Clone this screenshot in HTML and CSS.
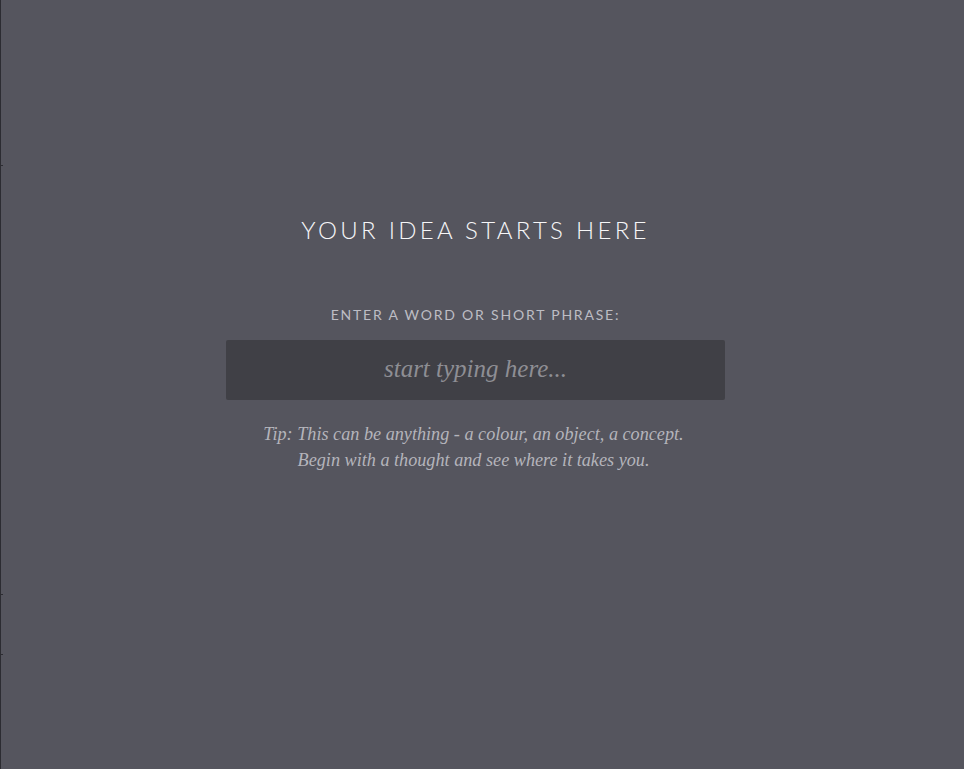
FILE: index.html
```html
<!DOCTYPE html>
<html lang="en">
<head>
<meta charset="utf-8">
<title>Your idea starts here</title>
<link rel="stylesheet" href="styles.css">
</head>
<body>
<div class="page">
  <span class="tick tick-a"></span>
  <span class="tick tick-b"></span>
  <span class="tick tick-c"></span>
  <main class="intro">
    <h1 class="title">YOUR IDEA STARTS HERE</h1>
    <label class="label" for="idea">ENTER A WORD OR SHORT PHRASE:</label>
    <input class="field" id="idea" type="text" placeholder="start typing here...">
    <p class="tip">Tip: This can be anything - a colour, an object, a concept.<br>Begin with a thought and see where it takes you.</p>
  </main>
</div>
</body>
</html>
```
FILE: styles.css
```css
html, body {
  margin: 0;
  padding: 0;
  height: 100%;
  background: #55555e;
}
.page {
  position: relative;
  box-sizing: border-box;
  height: 769px;
  border-left: 1px solid #2c2c32;
  display: flex;
  justify-content: center;
}
.tick {
  position: absolute;
  left: 0;
  width: 2px;
  height: 1px;
  background: #2c2c32;
}
.tick-a { top: 165px; }
.tick-b { top: 594px; }
.tick-c { top: 654px; }
.intro {
  display: flex;
  flex-direction: column;
  align-items: center;
  padding-top: 216px;
  margin-left: -14px;
}
.title {
  margin: 0;
  font-family: Lato, "Open Sans", sans-serif;
  font-weight: 300;
  font-size: 24px;
  line-height: 28px;
  letter-spacing: 3.3px;
  color: #f6f6f8;
}
.label {
  margin-top: 62px;
  font-family: Lato, "Open Sans", sans-serif;
  font-size: 14px;
  line-height: 18px;
  letter-spacing: 1.8px;
  color: #bdbdc4;
}
.field {
  margin-top: 16px;
  box-sizing: border-box;
  width: 499px;
  height: 60px;
  padding-bottom: 4px;
  border: none;
  border-radius: 2px;
  background: #404046;
  text-align: center;
  font-family: "Liberation Serif", serif;
  font-style: italic;
  font-size: 25px;
  color: #e0e0e4;
  outline: none;
}
.field::placeholder {
  color: #8e8e94;
}
.tip {
  margin: 21px 0 0;
  padding-right: 4px;
  text-align: center;
  font-family: "Liberation Serif", serif;
  font-style: italic;
  font-size: 18.2px;
  line-height: 26px;
  color: #b4b4bb;
}
```
